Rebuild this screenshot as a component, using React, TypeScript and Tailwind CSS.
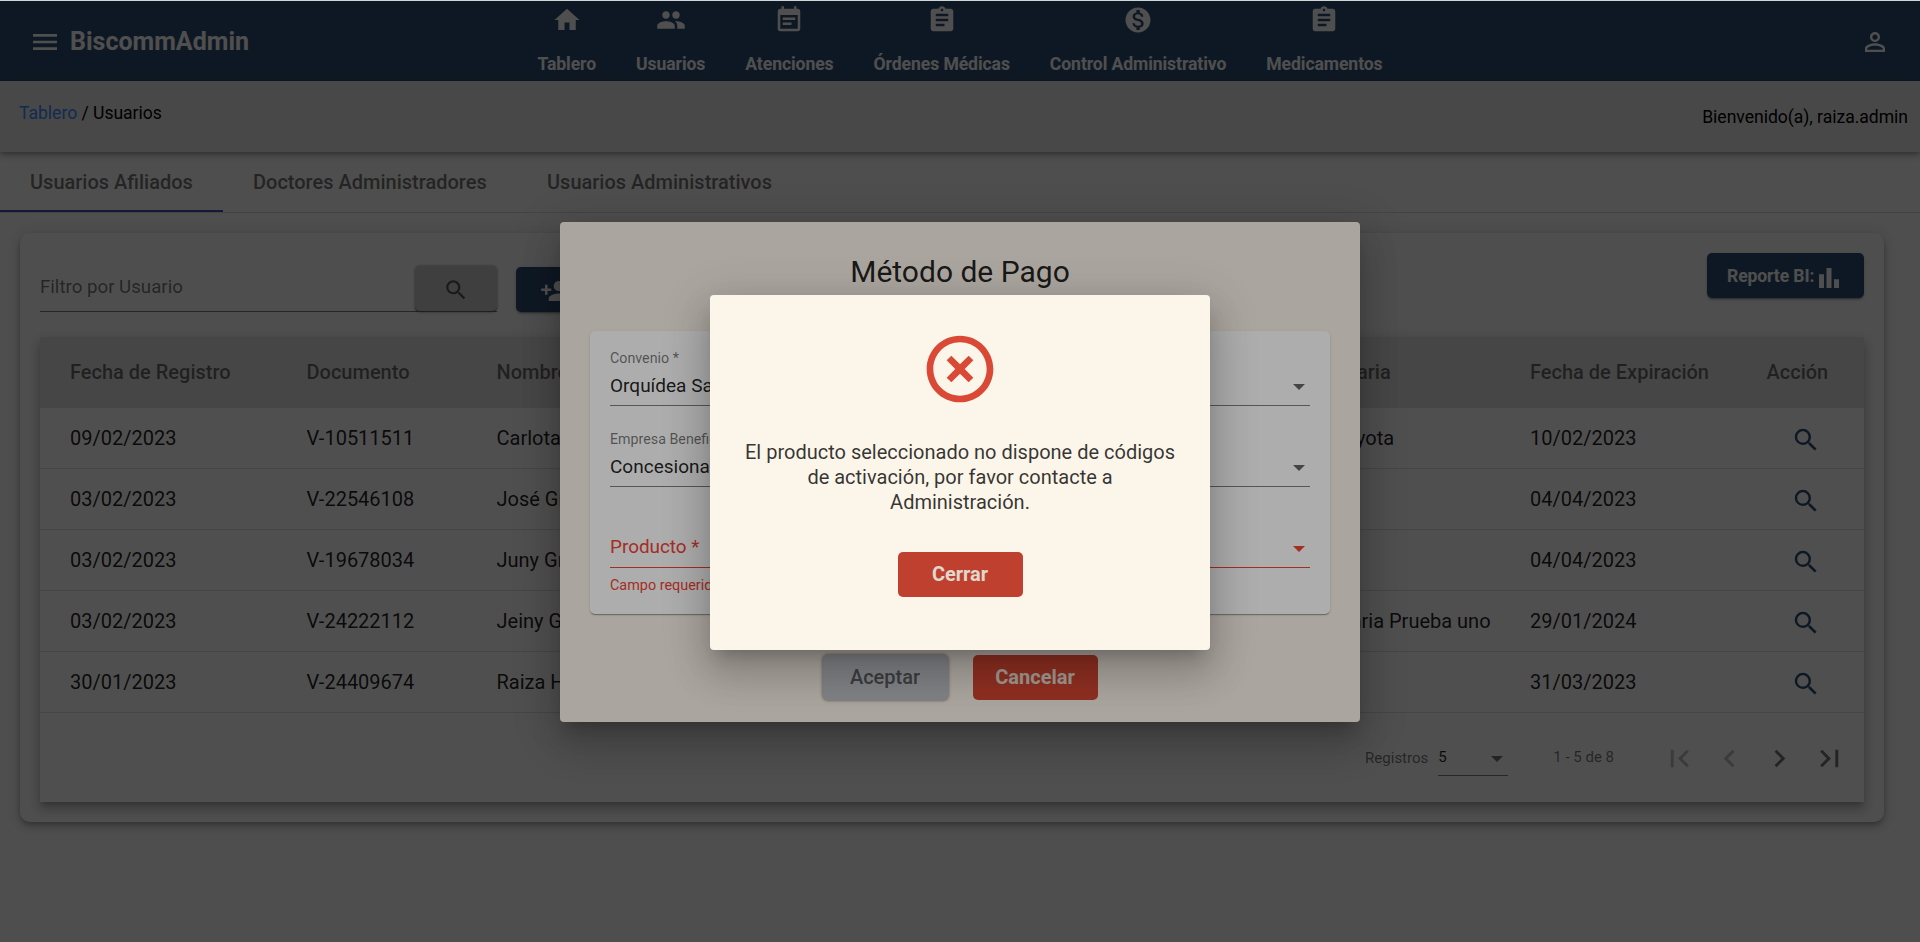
import type { ReactNode } from "react";
import {
  MdAssignment,
  MdBarChart,
  MdChevronLeft,
  MdChevronRight,
  MdEventNote,
  MdFirstPage,
  MdHighlightOff,
  MdHome,
  MdLastPage,
  MdMenu,
  MdMonetizationOn,
  MdPeople,
  MdPermIdentity,
  MdPersonAdd,
  MdSearch,
} from "react-icons/md";

const NAV = [
  { label: "Tablero", Icon: MdHome },
  { label: "Usuarios", Icon: MdPeople },
  { label: "Atenciones", Icon: MdEventNote },
  { label: "Órdenes Médicas", Icon: MdAssignment },
  { label: "Control Administrativo", Icon: MdMonetizationOn },
  { label: "Medicamentos", Icon: MdAssignment },
];

const TABS = ["Usuarios Afiliados", "Doctores Administradores", "Usuarios Administrativos"];

const ROWS = [
  { fecha: "09/02/2023", doc: "V-10511511", nombre: "Carlota", empresa: "Concesionario Toyota", expira: "10/02/2023" },
  { fecha: "03/02/2023", doc: "V-22546108", nombre: "José Gr", empresa: "", expira: "04/04/2023" },
  { fecha: "03/02/2023", doc: "V-19678034", nombre: "Juny Gr", empresa: "", expira: "04/04/2023" },
  { fecha: "03/02/2023", doc: "V-24222112", nombre: "Jeiny G", empresa: "Empresa Beneficiaria Prueba uno", expira: "29/01/2024" },
  { fecha: "30/01/2023", doc: "V-24409674", nombre: "Raiza H", empresa: "", expira: "31/03/2023" },
];

const GRID = "grid grid-cols-[236.5px_190px_704.5px_329px_236.5px_69px] pl-[30px]";

function Caret({ className }: { className: string }) {
  return (
    <svg viewBox="0 0 12 6" className={`h-[6px] w-[12px] ${className}`} fill="currentColor">
      <path d="M0 0h12L6 6z" />
    </svg>
  );
}

function Header() {
  return (
    <header className="grid h-20 shrink-0 grid-cols-[1fr_auto_1fr] bg-[#305073] text-white">
      <div className="flex items-center pt-px pl-[29px]">
        <MdMenu className="size-8" />
        <span className="ml-[9px] text-[25px] font-bold">BiscommAdmin</span>
      </div>
      <nav className="flex gap-10">
        {NAV.map(({ label, Icon }) => (
          <div key={label} className="flex flex-col items-center gap-[17px] pt-1">
            <Icon className="size-[30px]" />
            <span className="text-[17.6px] leading-6 font-bold tracking-[-0.09px]">{label}</span>
          </div>
        ))}
      </nav>
      <div className="flex items-center justify-end pt-[2px] pr-[30px]">
        <MdPermIdentity className="size-[30px]" />
      </div>
    </header>
  );
}

function SubBar() {
  return (
    <div className="relative flex h-[71px] shrink-0 justify-between bg-[#e9e9e9] pr-3 pl-[19px] text-[17.6px] leading-6 tracking-[-0.04px] text-black shadow-[0_2px_4px_-1px_rgba(0,0,0,0.2),0_4px_5px_0_rgba(0,0,0,0.14),0_1px_10px_0_rgba(0,0,0,0.12)]">
      <p className="pt-5">
        <span className="text-[#3a8cff]">Tablero</span> / Usuarios
      </p>
      <p className="pt-6">Bienvenido(a), raiza.admin</p>
    </div>
  );
}

function Tabs() {
  return (
    <div className="flex h-[61px] shrink-0 border-b border-black/12">
      {TABS.map((tab, i) => (
        <div
          key={tab}
          className={`flex h-[60px] items-center pl-[30px] text-[20px] font-medium text-black/55 ${
            i === 0 ? "w-[223px] shadow-[inset_0_-2px_0_#3f51b5]" : i === 1 ? "w-[294px]" : ""
          }`}
        >
          {tab}
        </div>
      ))}
    </div>
  );
}

function Toolbar() {
  return (
    <div className="flex h-[84px] items-start">
      <div className="flex h-[59px] w-[457px] items-end justify-between border-b border-black/50">
        <span className="pb-3 text-[18.7px] leading-6 text-black/54">Filtro por Usuario</span>
        <div className="-mb-px flex h-[46px] w-[82px] items-center justify-center rounded-[5px] border-b border-black/50 bg-[#cecece] shadow-[0_0_3px_rgba(0,0,0,0.45)]">
          <MdSearch className="mt-[3px] size-[26px] text-[#565656]" />
        </div>
      </div>
      <div className="mt-[14px] ml-[19px] flex h-[45px] w-[125px] items-center rounded-[5px] bg-[#305073] pl-6 text-white shadow-[0_3px_1px_-2px_rgba(0,0,0,0.2),0_2px_2px_0_rgba(0,0,0,0.14),0_1px_5px_0_rgba(0,0,0,0.12)]">
        <MdPersonAdd className="mt-[2px] size-[30px]" />
      </div>
      <div className="ml-auto flex h-[45px] w-[157px] items-center rounded-[5px] bg-[#305073] pl-5 text-white shadow-[0_3px_1px_-2px_rgba(0,0,0,0.2),0_2px_2px_0_rgba(0,0,0,0.14),0_1px_5px_0_rgba(0,0,0,0.12)]">
        <span className="pt-[2px] text-[17.6px] font-bold tracking-[-0.12px]">Reporte BI:</span>
        <MdBarChart className="mt-[5px] size-[30px]" />
      </div>
    </div>
  );
}

function Paginator() {
  return (
    <div className="flex h-[89px] items-center justify-end pr-[17px] text-[15px] text-black/54">
      <span className="pt-px">Registros</span>
      <div className="mt-[1px] ml-[10px] flex h-9 w-[70px] items-center justify-between border-b border-black/50 pr-[5px] text-black/87">
        <span>5</span>
        <Caret className="mt-[3px] text-black/54" />
      </div>
      <span className="ml-[45px]">1 - 5 de 8</span>
      <div className="ml-12 flex gap-[15px] pt-[2px]">
        <MdFirstPage className="size-[35px] text-black/26" />
        <MdChevronLeft className="size-[35px] text-black/26" />
        <MdChevronRight className="size-[35px]" />
        <MdLastPage className="size-[35px]" />
      </div>
    </div>
  );
}

function UsersTable() {
  return (
    <div className="bg-white text-[20px] shadow-[0_5px_5px_-3px_rgba(0,0,0,0.2),0_8px_10px_1px_rgba(0,0,0,0.14),0_3px_14px_2px_rgba(0,0,0,0.12)]">
      <div className={`${GRID} h-[71px] items-center bg-[#e2e2e2] pb-[2px] font-medium text-black/54`}>
        <span>Fecha de Registro</span>
        <span>Documento</span>
        <span>Nombre</span>
        <span>Empresa Beneficiaria</span>
        <span>Fecha de Expiración</span>
        <span>Acción</span>
      </div>
      {ROWS.map((r) => (
        <div key={r.doc} className={`${GRID} h-[61px] items-center border-b border-black/12 text-black/87`}>
          <span>{r.fecha}</span>
          <span>{r.doc}</span>
          <span>{r.nombre}</span>
          <span className={r.empresa.startsWith("Empresa") ? "-ml-[5px]" : ""}>{r.empresa}</span>
          <span>{r.expira}</span>
          <MdSearch className="mt-1 ml-[24.5px] size-[30px] text-[#305073]" />
        </div>
      ))}
      <Paginator />
    </div>
  );
}

function Field({ label, value }: { label: string; value: string }) {
  return (
    <div className="flex h-[81px] items-end justify-between border-b border-black/50 pr-[5px]">
      <div className="pb-[7px]">
        <p className="text-[14.25px] leading-5 text-black/54">{label}</p>
        <p className="mt-[6px] text-[19px] leading-6 text-black/87">{value}</p>
      </div>
      <Caret className="mb-[15px] text-black/60" />
    </div>
  );
}

function PaymentDialog() {
  return (
    <section className="flex h-[500px] w-[800px] flex-col rounded-[4px] bg-[#fbf4e9] px-[30px] shadow-[0_11px_15px_-7px_rgba(0,0,0,0.2),0_24px_38px_3px_rgba(0,0,0,0.14),0_9px_46px_8px_rgba(0,0,0,0.12)]">
      <h2 className="mt-[30px] text-center text-[30px] leading-10 text-black/87">Método de Pago</h2>
      <div className="mt-[39px] h-[283px] rounded-[5px] bg-white px-5 shadow-[0_2px_1px_-1px_rgba(0,0,0,0.2),0_1px_1px_0_rgba(0,0,0,0.14),0_1px_3px_0_rgba(0,0,0,0.12)]">
        <div className="-mt-[6px]">
          <Field label="Convenio *" value="Orquídea Sa" />
          <Field label="Empresa Beneficiaria" value="Concesionario" />
        </div>
        <div className="flex h-[81px] items-end justify-between border-b border-[#f44336] pr-[5px] text-[#f44336]">
          <span className="pb-2 text-[18.9px] leading-6">Producto *</span>
          <Caret className="mb-[15px]" />
        </div>
        <p className="mt-2 text-[14.4px] leading-5 text-[#f44336]">Campo requerido</p>
      </div>
      <div className="mt-[41px] flex justify-center gap-[25px] text-[20px]">
        <div className="flex h-[45px] w-[125px] items-center justify-center rounded-[5px] bg-[#bfc0c6] pb-[2px] font-medium text-[#5a5b5e] shadow-[0_0_3px_1px_rgba(0,0,0,0.35)]">
          Aceptar
        </div>
        <div className="flex h-[45px] w-[125px] items-center justify-center rounded-[5px] bg-[#d34633] pb-[2px] font-bold text-[#ece2d6]">
          Cancelar
        </div>
      </div>
    </section>
  );
}

function ErrorDialog() {
  return (
    <section className="flex h-[355px] w-[500px] flex-col items-center rounded-[4px] bg-[#fcf5ea] px-[30px] shadow-[0_11px_15px_-7px_rgba(0,0,0,0.2),0_24px_38px_3px_rgba(0,0,0,0.14),0_9px_46px_8px_rgba(0,0,0,0.12)]">
      <MdHighlightOff className="mt-[34px] size-20 shrink-0 text-[#da4935]" />
      <p className="mt-[31px] text-center text-[20px] leading-[25px] text-black/80">
        El producto seleccionado no dispone de códigos
        <br />
        de activación, por favor contacte a
        <br />
        Administración.
      </p>
      <div className="mt-[37px] flex h-[45px] w-[125px] items-center justify-center rounded-[5px] bg-[#c0402f] pb-[2px] text-[20px] font-bold text-[#dfd8cd]">
        Cerrar
      </div>
    </section>
  );
}

function Overlay({ tint, children }: { tint: string; children: ReactNode }) {
  return <div className={`absolute inset-0 flex items-start justify-center ${tint}`}>{children}</div>;
}

export default function App() {
  return (
    <div className="relative flex h-[942px] w-full flex-col overflow-hidden border-t border-[#cfd6d8] bg-[#fafafa] font-[Roboto,sans-serif]">
      <Header />
      <SubBar />
      <Tabs />
      <main className="mt-5 mr-9 ml-5 rounded-[10px] bg-[#fdfdfd] p-5 shadow-[0_3px_5px_-1px_rgba(0,0,0,0.2),0_5px_8px_0_rgba(0,0,0,0.14),0_1px_14px_0_rgba(0,0,0,0.12)]">
        <Toolbar />
        <UsersTable />
      </main>
      <Overlay tint="bg-black/54 pt-[221px]">
        <PaymentDialog />
      </Overlay>
      <Overlay tint="bg-black/32 pt-[294px]">
        <ErrorDialog />
      </Overlay>
    </div>
  );
}
